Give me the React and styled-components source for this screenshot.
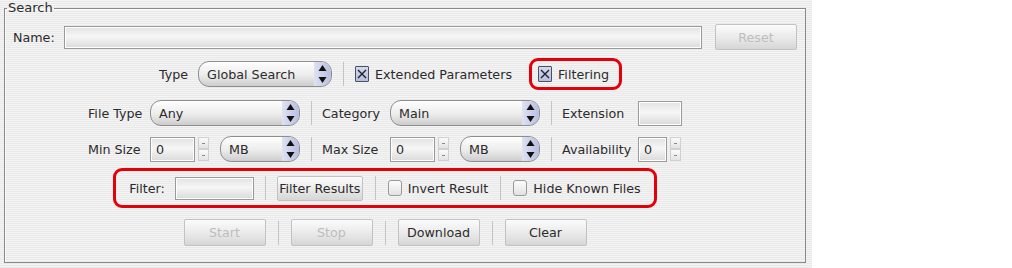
import styled, { createGlobalStyle } from "styled-components";

const GlobalStyle = createGlobalStyle`
  body {
    margin: 0;
    background: #fff;
    font-family: "DejaVu Sans", "Liberation Sans", sans-serif;
    font-size: 12.7px;
    color: #2b2b2b;
  }
`;

const Window = styled.div`
  width: 812px;
  height: 268px;
  box-sizing: border-box;
  padding: 0 6px 0 4px;
  background: repeating-linear-gradient(
    to bottom,
    #f4f4f4 0,
    #f4f4f4 1px,
    #e9e9e9 1px,
    #e9e9e9 2px
  );
`;

const Group = styled.fieldset`
  margin: 0;
  padding: 0;
  height: 263px;
  box-sizing: border-box;
  border: 1px solid #8a8a8a;
  box-shadow: inset 1px 1px 0 #fafafa;
  min-width: 0;
`;

const Legend = styled.legend`
  margin-left: 2px;
  padding: 0 1px;
  line-height: 16px;
  font-size: 13px;
  color: #2b2b2b;
`;

const Content = styled.div`
  padding: 8px 8px 0 8px;
`;

const NameRow = styled.div`
  display: flex;
  align-items: center;
  height: 26px;
`;

const Label = styled.span`
  white-space: nowrap;
  margin-right: ${(p) => p.$gap ?? 10}px;
`;

const TextInput = styled.div`
  box-sizing: border-box;
  height: ${(p) => p.$h || 23}px;
  width: ${(p) => (p.$w ? p.$w + "px" : "auto")};
  flex: ${(p) => (p.$w ? "none" : 1)};
  border: 1px solid #9a9a9a;
  box-shadow: inset 1px 1px 0 #fff, inset -1px -1px 0 #fff;
  background: linear-gradient(to bottom, #e2e2e2, #f6f6f6 45%, #dadada);
  padding-left: 5px;
  display: flex;
  align-items: center;
`;

const Button = styled.div`
  box-sizing: border-box;
  width: ${(p) => p.$w || 82}px;
  height: ${(p) => p.$h || 27}px;
  margin-left: ${(p) => p.$ml || 0}px;
  border: 1px solid #c2c2c2;
  border-radius: 2px;
  background: linear-gradient(to bottom, #fbfbfb, #e9e9e9 55%, #d6d6d6);
  color: ${(p) => (p.$disabled ? "#bdbdbd" : "#2b2b2b")};
  display: flex;
  align-items: center;
  justify-content: center;
  white-space: nowrap;
`;

const Lower = styled.div`
  padding-right: 40px;
`;

const CenterRow = styled.div`
  display: flex;
  justify-content: center;
  align-items: center;
  margin-top: ${(p) => p.$mt}px;
  height: ${(p) => p.$h}px;
  padding-left: ${(p) => p.$pl || 0}px;
`;

const Sep = styled.span`
  width: 1px;
  height: 24px;
  background: #c4c4c4;
  margin: 0 ${(p) => p.$m ?? 12}px;
  flex: none;
`;

const Highlight = styled.div`
  box-sizing: border-box;
  display: flex;
  align-items: center;
  height: ${(p) => p.$h}px;
  border: 3.5px solid #e40008;
  border-radius: 9px;
  padding: 0 ${(p) => p.$pr}px 0 ${(p) => p.$pl}px;
  margin-left: ${(p) => p.$ml || 0}px;
`;

const ComboBox = styled.div`
  box-sizing: border-box;
  width: ${(p) => p.$w}px;
  height: 26px;
  border: 1px solid #8e8e8e;
  border-radius: 11px;
  background: linear-gradient(to bottom, #fefefe, #ececec 55%, #cdcdcd);
  display: flex;
  align-items: center;
  overflow: hidden;
  flex: none;
`;

const ComboText = styled.span`
  flex: 1;
  padding-left: 8px;
  white-space: nowrap;
`;

const ComboArrow = styled.span`
  width: 17px;
  height: 100%;
  background: linear-gradient(to right, #dfe2f2, #b7bee0);
  display: flex;
  align-items: center;
  justify-content: center;
`;

const Combo = ({ value, w }) => (
  <ComboBox $w={w}>
    <ComboText>{value}</ComboText>
    <ComboArrow>
      <svg width="9" height="20" viewBox="0 0 9 20">
        <path d="M4.5 1 L8.5 7 L0.5 7 Z" fill="#111" />
        <path d="M0.5 13 L8.5 13 L4.5 19 Z" fill="#111" />
      </svg>
    </ComboArrow>
  </ComboBox>
);

const CheckBox = styled.span`
  box-sizing: border-box;
  width: 14px;
  height: 16px;
  margin-right: 6px;
  display: inline-flex;
  align-items: center;
  justify-content: center;
  flex: none;
  border: 1px solid ${(p) => (p.$checked ? "#4a4f66" : "#9a9a9a")};
  border-radius: ${(p) => (p.$checked ? 1 : 3)}px;
  background: ${(p) =>
    p.$checked
      ? "linear-gradient(to bottom, #d6d9ea, #b9bed8)"
      : "linear-gradient(to bottom, #fdfdfd, #e2e2e2)"};
`;

const CheckText = styled.span`
  white-space: nowrap;
`;

const CheckItem = ({ checked, children }) => (
  <>
    <CheckBox $checked={checked}>
      {checked && (
        <svg width="10" height="10" viewBox="0 0 10 10">
          <path d="M1 1 L9 9 M9 1 L1 9" stroke="#1c2138" strokeWidth="1.4" />
        </svg>
      )}
    </CheckBox>
    <CheckText>{children}</CheckText>
  </>
);

const Grid = styled.div`
  display: grid;
  grid-template-columns: 62px 150px 22px 68px 150px 22px 76px 44px;
  grid-auto-rows: 26px;
  row-gap: 10px;
  align-items: center;
  justify-content: center;
  margin-top: 10px;
`;

const Cell = styled.div`
  display: flex;
  align-items: center;
  justify-content: ${(p) => p.$justify || "flex-start"};
  white-space: nowrap;
`;

const SpinWrap = styled.div`
  display: flex;
  align-items: center;
  margin-right: ${(p) => p.$mr || 0}px;
`;

const SpinButtons = styled.div`
  display: flex;
  flex-direction: column;
  margin-left: 3px;
`;

const SpinBtn = styled.span`
  box-sizing: border-box;
  width: 11px;
  height: 12px;
  border: 1px solid #d0d0d0;
  background: linear-gradient(to bottom, #fafafa, #e3e3e3);
  display: flex;
  align-items: center;
  justify-content: center;
  &::after {
    content: "";
    width: 3px;
    height: 1px;
    background: #8a8a8a;
  }
`;

const Spin = ({ w, mr }) => (
  <SpinWrap $mr={mr}>
    <TextInput $w={w} $h={25}>0</TextInput>
    <SpinButtons>
      <SpinBtn />
      <SpinBtn />
    </SpinButtons>
  </SpinWrap>
);

const VSep = () => (
  <Cell $justify="center">
    <Sep $m={0} />
  </Cell>
);

export default function App() {
  return (
    <>
      <GlobalStyle />
      <Window>
        <Group>
          <Legend>Search</Legend>
          <Content>
            <NameRow>
              <Label $gap={9}>Name:</Label>
              <TextInput />
              <Button $w={82} $h={26} $ml={13} $disabled>
                Reset
              </Button>
            </NameRow>
            <Lower>
              <CenterRow $mt={8} $h={32} $pl={11}>
                <Label>Type</Label>
                <Combo value="Global Search" w={134} />
                <Sep $m={11} />
                <CheckItem checked>Extended Parameters</CheckItem>
                <Highlight $h={32} $pl={6} $pr={10} $ml={17}>
                  <CheckItem checked>Filtering</CheckItem>
                </Highlight>
              </CenterRow>
              <Grid>
                <Cell>File Type</Cell>
                <Combo value="Any" w={150} />
                <VSep />
                <Cell>Category</Cell>
                <Combo value="Main" w={150} />
                <VSep />
                <Cell>Extension</Cell>
                <TextInput $w={44} $h={25} />

                <Cell>Min Size</Cell>
                <Cell>
                  <Spin w={45} mr={11} />
                  <Combo value="MB" w={80} />
                </Cell>
                <VSep />
                <Cell>Max Size</Cell>
                <Cell>
                  <Spin w={45} mr={11} />
                  <Combo value="MB" w={80} />
                </Cell>
                <VSep />
                <Cell>Availability</Cell>
                <Spin w={29} />
              </Grid>
              <CenterRow $mt={6} $h={40}>
                <Highlight $h={40} $pl={13} $pr={13}>
                  <Label>Filter:</Label>
                  <TextInput $w={79} />
                  <Sep $m={11} />
                  <Button $w={86} $h={25}>
                    Filter Results
                  </Button>
                  <Sep $m={12} />
                  <CheckItem>Invert Result</CheckItem>
                  <Sep $m={12} />
                  <CheckItem>Hide Known Files</CheckItem>
                </Highlight>
              </CenterRow>
              <CenterRow $mt={11} $h={27}>
                <Button $disabled>Start</Button>
                <Sep />
                <Button $disabled>Stop</Button>
                <Sep />
                <Button>Download</Button>
                <Sep />
                <Button>Clear</Button>
              </CenterRow>
            </Lower>
          </Content>
        </Group>
      </Window>
    </>
  );
}
